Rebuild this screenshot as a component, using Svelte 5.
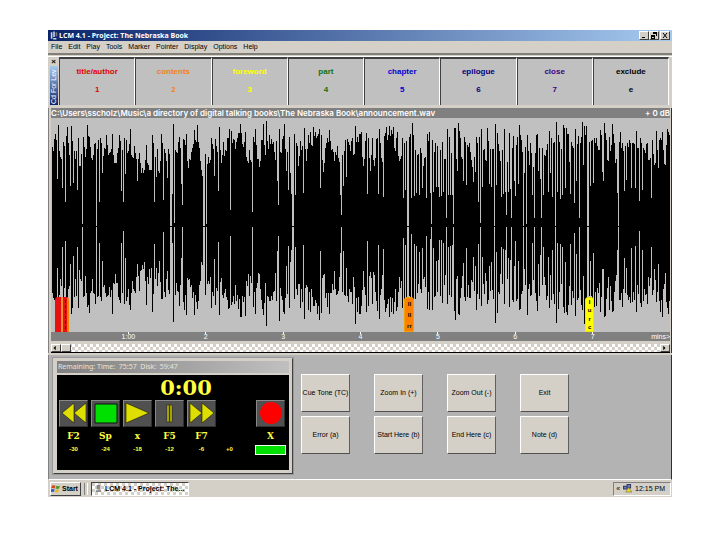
<script>
  const menuItems = ["File", "Edit", "Play", "Tools", "Marker", "Pointer", "Display", "Options", "Help"];

  const levels = [
    { name: "title/author", key: "1", color: "red" },
    { name: "contents", key: "2", color: "orange" },
    { name: "foreword", key: "3", color: "yellow" },
    { name: "part", key: "4", color: "green" },
    { name: "chapter", key: "5", color: "blue" },
    { name: "epilogue", key: "6", color: "navy" },
    { name: "close", key: "7", color: "purple" },
    { name: "exclude", key: "e", color: "black" },
  ];

  const commands = [
    "Cue Tone (TC)", "Zoom In (+)", "Zoom Out (-)", "Exit",
    "Error (a)", "Start Here (b)", "End Here (c)", "Note (d)",
  ];

  const transport = [
    { icon: "rewind", key: "F2", level: "-30" },
    { icon: "stop", key: "Sp", level: "-24" },
    { icon: "play", key: "x", level: "-18" },
    { icon: "pause", key: "F5", level: "-12" },
    { icon: "forward", key: "F7", level: "-6" },
  ];

  const minutes = ["1:00", "2", "3", "4", "5", "6", "7"];

  //-----------------------waveform--------------------
  const W = 618;
  const H = 213;
  const mid = 107;

  // x,y of the upper outline
  const peaks = `1,29 4,16 7,7 9,39 12,24 16,9 18,37 20,8 23,33 25,33 27,20 28,48 30,36 32,19 34,39 36,7 38,19 41,42 43,26 47,22
    49,20 53,30 55,17 58,35 61,16 63,45 66,35 68,17 71,32 73,20 75,22 77,33 79,11 80,37 83,28 88,35 89,45 93,52 95,27 98,52 100,52
    101,17 104,39 106,31 108,55 110,16 114,35 117,31 122,6 124,32 128,19 133,22 135,16 136,43 140,34 143,12 145,24 146,7 148,30
    150,52 154,36 157,39 158,45 160,20 164,21 166,34 168,9 170,45 172,24 174,32 176,20 178,11 180,13 183,22 186,20 189,6 192,29
    194,14 196,43 198,32 200,44 202,19 204,11 207,41 209,43 210,22 212,6 214,37 215,3 217,31 218,17 222,24 224,42 225,23 228,11
    229,34 231,21 233,6 235,53 236,34 238,19 239,55 243,16 246,28 247,48 249,23 250,32 253,10 255,43 257,17 259,14 261,28 262,9
    266,18 268,11 270,17 272,54 274,30 276,20 278,12 282,34 286,28 288,44 291,37 294,22 296,21 298,27 301,20 303,36 304,8 306,19
    309,14 311,48 313,23 314,15 316,20 318,53 320,20 322,48 324,21 327,11 330,44 332,18 334,9 336,17 337,8 341,9 342,30 345,14
    347,43 350,20 352,25 354,23 357,19 360,5 363,32 365,37 368,30 372,40 375,16 377,14 380,22 383,25 388,32 390,24 392,41 395,11
    397,19 399,35 402,10 403,10 404,41 405,53 406,5 408,20 410,41 412,19 415,27 417,25 419,42 422,39 424,19 427,19 429,11 432,31
    434,43 435,10 438,31 441,31 443,6 445,15 447,33 450,32 452,11 455,44 457,15 460,30 461,18 465,19 467,7 469,22 473,29 475,17
    477,47 478,25 481,49 484,17 485,16 487,30 490,30 492,37 494,32 497,13 499,20 501,25 504,4 507,24 509,31 511,7 514,10 516,16
    517,44 519,24 521,30 523,11 526,18 528,25 530,4 531,47 532,8 534,8 537,24 540,22 542,20 544,20 546,32 548,12 552,5 554,22
    556,43 557,19 559,27 560,6 562,25 563,45 567,24 568,14 570,25 573,28 575,25 577,22 580,25 584,13 586,30 588,20 591,30 595,25
    597,42 600,22 603,45 604,13 606,50 607,22 610,14 612,46 614,27 615,11 617,17`;

  // one-pixel silences that cut into the outline
  const dips = `6,61 11,70 14,84 19,68 22,65 26,72 31,106 45,107 48,84 51,55 70,73 72,84 74,56 86,63 103,84 105,59 112,82 116,60
    119,107 120,107 121,76 123,105 130,66 131,87 152,107 153,107 155,106 163,58 167,73 179,92 201,94 226,63 227,87 237,72 240,76
    241,107 242,107 244,77 252,75 269,70 289,77 290,97 292,68 295,59 315,76 326,76 331,79 351,80 353,72 355,107 356,107 359,80
    362,78 364,75 367,77 370,70 374,80 378,75 379,106 381,74 384,69 386,69 387,79 389,78 391,74 394,100 396,77 398,77 400,77
    401,106 411,63 414,67 421,64 423,54 426,84 428,105 430,69 437,66 439,69 442,107 444,67 449,79 451,76 453,74 454,97 456,74
    458,71 459,100 462,63 463,78 466,66 471,107 472,55 474,106 480,77 482,100 486,53 488,61 489,100 491,77 496,74 498,55 500,79
    503,107 505,74 508,81 510,77 513,70 518,76 522,85 524,63 527,100 535,107 536,107 538,68 541,65 550,54 551,63 565,75 566,107
    572,73 574,62 579,70 583,70 587,83 590,72 599,80`;

  const parse = (text) => text.trim().split(/\s+/).map((pair) => pair.split(",").map(Number));

  function buildWave() {
    const outline = parse(peaks);
    const cuts = new Map(parse(dips));
    let path = "";
    let i = 0;
    for (let x = 1; x < W; x++) {
      while (i < outline.length - 2 && outline[i + 1][0] <= x) i++;
      const [x0, y0] = outline[i];
      const [x1, y1] = outline[i + 1];
      const onPeak = x === x0 || x === x1;
      const between = Math.round(y0 + ((y1 - y0) * (x - x0)) / (x1 - x0));
      const jitter = onPeak ? 0 : (x * 37) % 11;
      const top = cuts.has(x) ? cuts.get(x) : between + jitter;
      const low = Math.max(mid + 1, H - top - ((x * 29) % 19));
      path += `M${x} ${Math.min(top, mid)}h1V${low}h-1z`;
    }
    return path;
  }

  const wave = buildWave();
</script>

<main>
  <div class="app">
    <header class="titlebar">
      <svg class="app-icon" viewBox="0 0 10 10"><path d="M1 1h2v8H1zM4 0h2v7H4zM4 8h4v2H4z" fill="#c9d3e8" /><path d="M7 1h2v5H7z" fill="#778" /></svg>
      <h1>LCM 4.1 - Project: The Nebraska Book</h1>
      <div class="window-buttons">
        <button aria-label="Minimize"><svg viewBox="0 0 8 7"><path d="M2 5h3v1H2z" /></svg></button>
        <button aria-label="Restore"><svg viewBox="0 0 8 7"><path d="M3 0h4v4H6V2H3zM1 3h4v4H1zM2 5v1h2V5z" fill-rule="evenodd" /></svg></button>
        <button class="close" aria-label="Close"><svg viewBox="0 0 8 7"><path d="M2 1l4 5M6 1L2 6" stroke="#000" /></svg></button>
      </div>
    </header>

    <nav>
      {#each menuItems as item}
        <button>{item}</button>
      {/each}
    </nav>

    <section class="toolbar">
      <div class="handle">
        <button aria-label="Hide toolbar">×</button>
        <span>Cd For Lev</span>
      </div>
      <div class="levels">
        {#each levels as level}
          <button class={level.color}>
            <span>{level.name}</span>
            <span>{level.key}</span>
          </button>
        {/each}
      </div>
    </section>

    <section class="editor">
      <div class="path">
        <span>C:\Users\sscholz\Music\a directory of digital talking books\The Nebraska Book\announcement.wav</span>
        <span>+ 0 dB</span>
      </div>
      <div class="wave">
        <svg viewBox="0 0 {W} {H}" preserveAspectRatio="none" shape-rendering="crispEdges">
          <path d={wave} />
        </svg>
        <div class="marker first"></div>
        <div class="marker second"><i>II</i><i>II</i><i>rr</i></div>
        <div class="marker third"><i>I</i><i>u</i><i>r</i><i>c</i></div>
      </div>
      <div class="ruler">
        <b></b>
        {#each minutes as minute}
          <span>{minute}</span>
        {/each}
        <em>mins&gt;</em>
      </div>
      <div class="scroll">
        <button aria-label="Scroll left"><svg viewBox="0 0 8 8"><path d="M5 1v6L2 4z" /></svg></button>
        <div class="thumb"></div>
        <button aria-label="Scroll right"><svg viewBox="0 0 8 8"><path d="M3 1v6l3-3z" /></svg></button>
      </div>
    </section>

    <section class="controls">
      <div class="player">
        <h2>Remaining: Time: &nbsp;75:57 &nbsp;Disk: &nbsp;59:47</h2>
        <div class="deck">
          <div class="time">0:00</div>
          <div class="transport">
            {#each transport as item}
              <div class="unit-col">
                <button aria-label={item.icon}>
                  <svg viewBox="0 0 27 25">
                    {#if item.icon === "rewind"}
                      <path class="y" d="M14 2v20L2 12zM26 2v20L14 12z" />
                    {:else if item.icon === "stop"}
                      <path d="M3 3h22v19H3z" fill="#00e000" stroke="#111" />
                    {:else if item.icon === "play"}
                      <path class="y" d="M2 2v20l23-10z" />
                    {:else if item.icon === "pause"}
                      <path class="y" d="M11 4h2v17h-2zM14 4h2v17h-2z" />
                    {:else}
                      <path class="y" d="M2 2v20l12-10zM14 2v20l12-10z" />
                    {/if}
                  </svg>
                </button>
                <span>{item.key}</span>
                <small>{item.level}</small>
              </div>
            {/each}
            <small class="zero">+0</small>
            <div class="unit-col">
              <button aria-label="record">
                <svg viewBox="0 0 27 25"><circle cx="14" cy="12" r="11" fill="#f00" /></svg>
              </button>
              <span>X</span>
              <div class="lamp"></div>
            </div>
          </div>
        </div>
      </div>

      <div class="commands">
        {#each commands as command}
          <button>{command}</button>
        {/each}
      </div>
    </section>

    <footer>
      <button class="start">
        <svg viewBox="0 0 10 10">
          <path d="M1 2q2-1 4 0L4 5Q2 4 0 5z" fill="#d8431f" />
          <path d="M6 2q2 1 4 0L9 5Q7 6 5 5z" fill="#4a9a28" />
          <path d="M0 6q2-1 4 0L3 9Q1 8 0 9z" fill="#2c58c0" />
          <path d="M5 6q2 1 4 0L8 9Q6 10 4 9z" fill="#e8b820" />
        </svg>
        Start
      </button>
      <div class="grip"></div>
      <button class="task">
        <svg viewBox="0 0 10 10"><path d="M3 1h4v5H3zM2 7h6v2H2z" fill="#888" /></svg>
        LCM 4.1 - Project: The...
      </button>
      <div class="tray">
        <span>«</span>
        <svg viewBox="0 0 10 10">
          <path d="M0 2h5v4H0zM4 0h5v5H4z" fill="#336" />
          <path d="M1 3h3v2H1zM5 1h3v3H5z" fill="#6880b8" />
          <path d="M6 4l4 5H3z" fill="#e8d820" stroke="#554" stroke-width=".5" />
        </svg>
        <span>12:15 PM</span>
      </div>
    </footer>
  </div>
</main>

<style>
  :global(body) {
    background: #fff;
  }

  main {
    padding: 30px 48px 42px;
    font: 8px/10px "Liberation Sans", Arial, sans-serif;
    color: #000;
  }

  .app {
    background: #d4d0c8;
  }

  h1,
  h2 {
    margin: 0;
  }

  button {
    display: block;
    box-sizing: border-box;
    padding: 0;
    border: 0;
    background: none;
    color: inherit;
    font: inherit;
    white-space: nowrap;
  }

  svg {
    display: block;
  }

  .titlebar {
    display: flex;
    align-items: center;
    height: 11px;
    padding: 0 2px;
    background: linear-gradient(to right, #0a246a, #a6caf0);
  }

  .app-icon {
    width: 8px;
    height: 9px;
    margin-right: 1px;
  }

  h1 {
    flex: 1;
    color: #fff;
    font: bold 7px/10px "Open Sans", sans-serif;
  }

  .window-buttons {
    display: flex;
  }

  .window-buttons button {
    width: 10px;
    height: 9px;
    border: 1px solid;
    border-color: #fff #404040 #404040 #fff;
    background: #d4d0c8;
  }

  .window-buttons .close {
    margin-left: 1px;
  }

  nav {
    display: flex;
    gap: 6px;
    height: 12px;
    padding-left: 3px;
    font-size: 7px;
    line-height: 12px;
    border-bottom: 2px solid #808078;
  }

  .toolbar {
    display: flex;
    margin-top: 1px;
    height: 48px;
    padding-right: 3px;
    border-top: 1px solid #fff;
  }

  .handle {
    display: flex;
    flex-direction: column;
    align-items: center;
    width: 11px;
  }

  .handle button {
    height: 9px;
    line-height: 9px;
    font-weight: bold;
  }

  .handle span {
    flex: 1;
    width: 8px;
    padding-top: 1px;
    background: linear-gradient(to bottom, #0a246a, #a6caf0);
    color: #fff;
    font-size: 7px;
    line-height: 8px;
    writing-mode: vertical-rl;
    transform: rotate(180deg);
    white-space: nowrap;
  }

  .levels {
    flex: 1;
    display: grid;
    grid-template-columns: repeat(8, 1fr);
  }

  .levels button {
    display: flex;
    flex-direction: column;
    align-items: center;
    gap: 8px;
    padding-top: 8px;
    border-top: 2px solid #404040;
    border-left: 1px solid #404040;
    border-right: 1px solid #fff;
    background: #c0c0c0;
    font-weight: bold;
  }

  .levels .red { color: #e00000; }
  .levels .orange { color: #f08020; }
  .levels .yellow { color: #ffff00; }
  .levels .green { color: #107010; }
  .levels .blue { color: #0000d0; }
  .levels .navy { color: #000080; }
  .levels .purple { color: #400080; }

  .editor {
    margin-top: 3px;
    padding: 0 1px 0 2px;
    border-left: 1px solid #808080;
    border-right: 1px solid #303030;
  }

  .path {
    display: flex;
    justify-content: space-between;
    height: 10px;
    background: #808080;
    color: #fff;
    font-family: Inter, "Liberation Sans", sans-serif;
    font-weight: 600;
    white-space: nowrap;
  }

  .wave {
    position: relative;
    background: #c0c0c0;
  }

  .wave svg {
    width: 100%;
    height: 214px;
  }

  .marker {
    position: absolute;
    bottom: 0;
    box-sizing: border-box;
    width: 10px;
    height: 35px;
    border-radius: 3px 3px 0 0;
    display: flex;
    flex-direction: column;
    align-items: center;
    justify-content: space-around;
    font-size: 6px;
    line-height: 6px;
    font-weight: bold;
  }

  .marker i {
    font-style: normal;
  }

  .first {
    left: 0.6%;
    width: 14px;
    background: linear-gradient(to right, #e81010 6px, #f09030 6px 8px, #e81010 8px 12px, #f08000 12px);
  }

  .first::after {
    content: "";
    height: 29px;
    margin-left: 7px;
    border-left: 1px dashed #400000;
  }

  .second {
    left: 57.1%;
    background: #ff8000;
    border: 1px solid #f0a000;
  }

  .third {
    left: 86.3%;
    width: 9px;
    background: #ffff00;
    border: 1px solid #e8e800;
  }

  .ruler {
    display: grid;
    grid-template-columns: 1fr repeat(7, 2fr) 1fr;
    height: 9px;
    background: #808080;
    color: #fff;
    font-size: 7px;
    line-height: 10px;
    text-align: center;
  }

  .ruler span {
    background: linear-gradient(#fff, #fff) center top / 1px 2px no-repeat;
  }

  .ruler em {
    font-style: normal;
    text-align: right;
  }

  .scroll {
    display: flex;
    height: 8px;
    margin-top: 3px;
    border-bottom: 1px solid #000;
    background: repeating-conic-gradient(#fff 0 25%, #d4d0c8 0 50%) 0 0 / 6px 6px;
  }

  .scroll button,
  .thumb {
    box-sizing: border-box;
    width: 10px;
    border: 1px solid;
    border-color: #fff #404040 #404040 #fff;
    background: #d4d0c8;
  }

  .scroll button:last-child {
    margin-left: auto;
  }

  .scroll button svg {
    height: 6px;
  }

  .controls {
    display: flex;
    align-items: flex-start;
    gap: 8px;
    margin-top: 2px;
    padding: 3px 0 5px 4px;
    border-left: 1px solid #808080;
    border-right: 1px solid #303030;
    border-bottom: 1px solid #fff;
    background: #b3b3b3;
  }

  .player {
    box-sizing: border-box;
    width: 240px;
    padding: 2px 3px 3px;
    border: 1px solid;
    border-color: #d4d0c8 #404040 #404040 #d4d0c8;
    outline: 1px solid #989898;
    background: #d4d0c8;
  }

  h2 {
    padding-left: 1px;
    background: linear-gradient(to right, #808080, #c0c0c0);
    color: #e8e4dc;
    font: 7px/12px "Noto Sans", sans-serif;
  }

  .deck {
    margin-top: 2px;
    height: 95px;
    box-sizing: border-box;
    padding: 1px 4px 0 2px;
    background: #000;
    color: #ffff40;
    font-family: "DejaVu Serif", serif;
    font-weight: bold;
  }

  .time {
    padding-left: 28px;
    font-size: 21px;
    line-height: 24px;
    text-align: center;
  }

  .transport {
    display: flex;
    gap: 3px;
  }

  .unit-col {
    display: flex;
    flex-direction: column;
    align-items: center;
    width: 29px;
  }

  .unit-col button {
    width: 29px;
    height: 27px;
    border: 1px solid;
    border-color: #888 #303030 #303030 #888;
    background: #505050;
  }

  .unit-col span {
    margin-top: 3px;
    font-size: 9px;
    line-height: 13px;
  }

  .y {
    fill: #dede00;
    stroke: #181800;
    stroke-width: 0.6;
  }

  small {
    margin-top: 2px;
    font: bold 6px/8px "Liberation Sans", sans-serif;
  }

  .zero {
    align-self: flex-end;
    margin-bottom: 2px;
    margin-left: 7px;
    margin-right: auto;
  }

  .lamp {
    box-sizing: border-box;
    width: 31px;
    height: 10px;
    margin-top: 2px;
    border: 1px solid #f0fff0;
    background: #00e000;
  }

  .commands {
    display: grid;
    grid-template-columns: repeat(4, 49px);
    gap: 4px 24px;
    margin-top: 16px;
  }

  .commands button {
    height: 38px;
    border: 1px solid;
    border-color: #fff #606060 #505050 #fff;
    background: #d4d0c8;
    font-size: 7px;
  }

  footer {
    display: flex;
    align-items: center;
    gap: 3px;
    height: 17px;
    padding: 0 1px 0 2px;
    font: 7px/10px "Liberation Sans", sans-serif;
  }

  footer svg {
    width: 9px;
    height: 9px;
  }

  .start,
  .task {
    display: flex;
    align-items: center;
    gap: 2px;
    height: 14px;
    border: 1px solid;
    border-color: #fff #404040 #404040 #fff;
    font-weight: bold;
  }

  .start {
    width: 31px;
  }

  .grip {
    width: 2px;
    height: 12px;
    border-left: 1px solid #808080;
    border-right: 1px solid #fff;
  }

  .task {
    width: 98px;
    padding-left: 2px;
    border-color: #404040 #fff #fff #404040;
    background: repeating-conic-gradient(#fff 0 25%, #d4d0c8 0 50%) 0 0 / 6px 6px;
  }

  .tray {
    display: flex;
    align-items: center;
    gap: 3px;
    box-sizing: border-box;
    height: 14px;
    margin-left: auto;
    padding: 0 5px 0 2px;
    border: 1px solid;
    border-color: #808080 #fff #fff #808080;
  }
</style>
